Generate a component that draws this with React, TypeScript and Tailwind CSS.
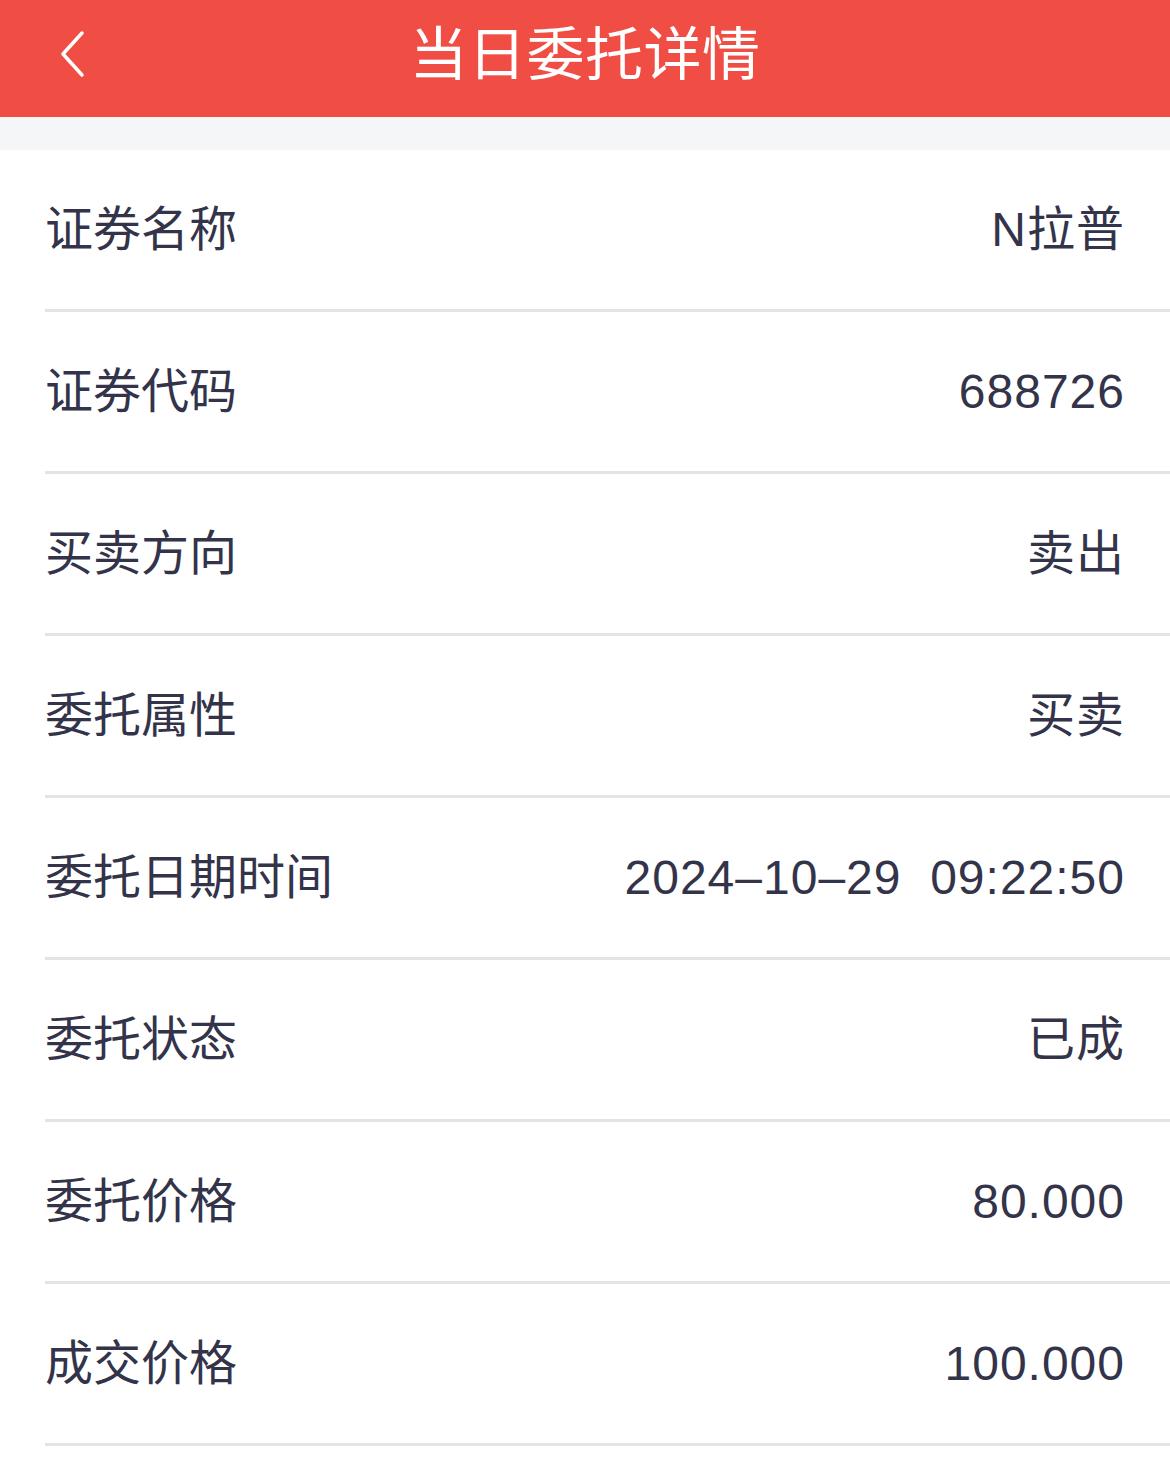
const rows: [string, string][] = [
  ["证券名称", "N拉普"],
  ["证券代码", "688726"],
  ["买卖方向", "卖出"],
  ["委托属性", "买卖"],
  ["委托日期时间", "2024–10–29  09:22:50"],
  ["委托状态", "已成"],
  ["委托价格", "80.000"],
  ["成交价格", "100.000"],
];

export default function App() {
  return (
    <div
      className="min-h-[1470px] w-[1170px] bg-white"
      style={{ fontFamily: '"Liberation Sans", "Noto Sans CJK SC", sans-serif' }}
    >
      <header className="relative flex h-[117px] items-center justify-center bg-[#f04e44] pb-[8px]">
        <button className="absolute left-[52px] top-[26px] flex h-[56px] w-[40px] items-center justify-center">
          <svg width="30" height="50" viewBox="0 0 30 50" fill="none">
            <path d="M25 4 L6 25 L25 46" stroke="white" strokeWidth="3.5" strokeLinecap="round" strokeLinejoin="round" />
          </svg>
        </button>
        <h1 className="text-[58px] font-normal tracking-[0.5px] text-white">当日委托详情</h1>
      </header>
      <div className="h-[33px] bg-[#f5f6f8]" />
      <div className="pl-[45px]">
        {rows.map(([label, value]) => (
          <div
            key={label}
            className="flex h-[162px] items-center justify-between border-b-[3px] border-[#e4e4e4] pr-[45px] text-[48px] text-[#33334a]"
          >
            <span>{label}</span>
            <span className="whitespace-pre tracking-[1px]">{value}</span>
          </div>
        ))}
      </div>
    </div>
  );
}
